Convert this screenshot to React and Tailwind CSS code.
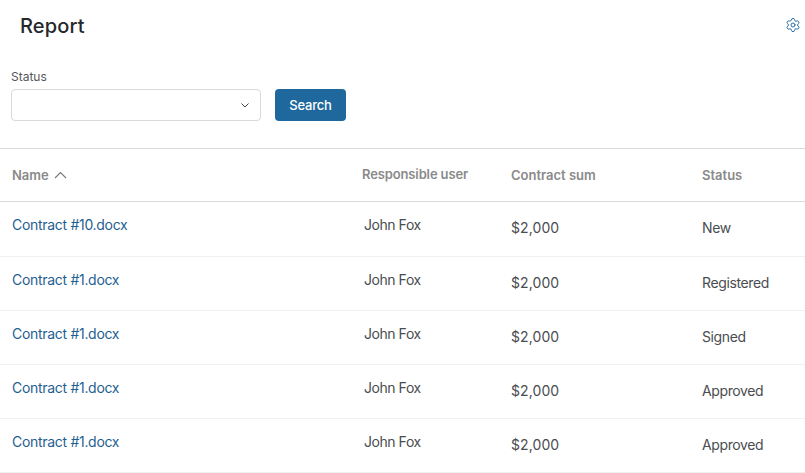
import React from "react";
import { Settings } from "lucide-react";

const rows = [
  ["Contract #10.docx", "New"],
  ["Contract #1.docx", "Registered"],
  ["Contract #1.docx", "Signed"],
  ["Contract #1.docx", "Approved"],
  ["Contract #1.docx", "Approved"],
];

export default function App() {
  return (
    <div className="w-[805px] h-[473px] overflow-hidden bg-white font-['Inter',sans-serif]">
      <div className="flex items-start justify-between h-[69px]">
        <h1 className="ml-5 mt-[13px] text-[20px] leading-[26px] font-medium tracking-[0.15px] text-[#25282b]">Report</h1>
        <div className="mt-[17px] mr-[4px]"><Settings size={16} strokeWidth={1.5} color="#2a6fa8" /></div>
      </div>
      <div className="flex items-end ml-[11px] h-[52px]">
        <div className="w-[250px]">
          <div className="text-[12px] leading-[16px] text-[#55585b] mb-[4px] pt-px">Status</div>
          <div className="h-8 border border-[#d9d9d9] rounded-[4px] flex items-center justify-end pr-[11px]">
            <svg width="8" height="5" viewBox="0 0 8 5" fill="none" stroke="#444" strokeWidth="1"><path d="M0.5 0.5 L4 4 L7.5 0.5" /></svg>
          </div>
        </div>
        <button className="ml-[14px] w-[71px] h-8 pt-px rounded-[4px] bg-[#1f689d] text-white text-[13px] font-medium tracking-[-0.2px]">Search</button>
      </div>
      <div className="mt-[27px] border-t border-[#d9d9d9]">
        <div className="grid grid-cols-[350px_149px_191px_1fr] h-[53px] border-b border-[#d9d9d9] text-[13px] font-semibold text-[#8a8a8a]">
          <div className="pl-3 pt-[17px] leading-[18px] flex items-start gap-[5px]">
            Name
            <svg className="mt-[5px]" width="13" height="8" viewBox="0 0 13 8" fill="none" stroke="#777" strokeWidth="1.1"><path d="M1 7 L6.5 1.5 L12 7" /></svg>
          </div>
          <div className="pl-3 pt-[16px] leading-[18px] tracking-[-0.13px]">Responsible user</div>
          <div className="pl-3 pt-[17px] leading-[18px]">Contract sum</div>
          <div className="pl-3 pt-[17px] leading-[18px]">Status</div>
        </div>
        {rows.map(([name, status], i) => (
          <div key={i} className={`grid grid-cols-[350px_149px_191px_1fr] border-b border-[#f0f0f0] text-[#4a4d50] ${i === 0 ? "h-[55px]" : "h-[54px]"}`}>
            <div className="pl-3 pt-[13px] text-[14px] leading-5 tracking-[-0.3px] text-[#1f5f91]">{name}</div>
            <div className="pl-[14px] pt-[13px] text-[14px] leading-5 tracking-[-0.45px]">John Fox</div>
            <div className="pl-3 pt-4 text-[14px] leading-5 tracking-[0.1px]">$2,000</div>
            <div className="pl-3 pt-4 text-[14px] leading-5 tracking-[-0.38px]">{status}</div>
          </div>
        ))}
      </div>
    </div>
  );
}
